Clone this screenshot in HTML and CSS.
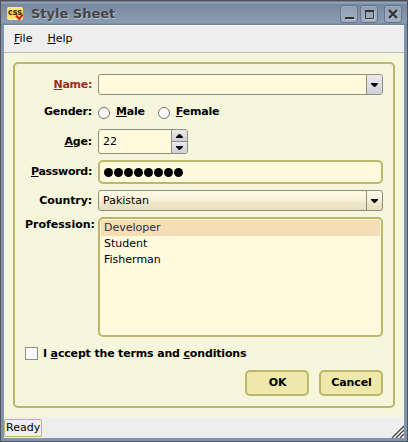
FILE: index.html
```html
<!DOCTYPE html>
<html lang="en">
<head>
<meta charset="utf-8">
<title>Style Sheet</title>
<link rel="stylesheet" href="styles.css">
</head>
<body>
<div class="window">
  <header class="titlebar">
    <svg class="app-icon" width="16" height="14" viewBox="0 0 16 14">
      <defs><linearGradient id="gold" x1="0" y1="0" x2="0" y2="1"><stop offset="0" stop-color="#fff08a"/><stop offset=".5" stop-color="#ffd52e"/><stop offset="1" stop-color="#fff18c"/></linearGradient></defs>
      <rect width="16" height="13" rx="2" fill="url(#gold)"/>
      <text class="icon-text" x="1" y="8" textLength="14" lengthAdjust="spacingAndGlyphs">css</text>
      <path d="M9 8.500l3.300 3.500 3.200-4.500" fill="none" stroke="#c8170c" stroke-width="2"/>
    </svg>
    <h1 class="title">Style Sheet</h1>
    <div class="controls">
      <span class="control"><svg width="16" height="16"><path d="M5 13.500h9" stroke="#bcc7d4"/><path d="M4 12h9" stroke="#333" stroke-width="2"/></svg></span>
      <span class="control"><svg width="16" height="16"><path d="M5 13.500h8.500V5" fill="none" stroke="#bcc7d4"/><path d="M4.500 4v8.500h8V4" fill="none" stroke="#3a3a3c"/><path d="M4 5h9" stroke="#333" stroke-width="2"/></svg></span>
      <span class="control close"><svg width="16" height="16"><path d="M5 5l8 8M13 5l-8 8" stroke="#bcc7d4" stroke-width="1.500"/><path d="M4 4l8 8M12 4l-8 8" stroke="#333" stroke-width="2.300"/></svg></span>
    </div>
  </header>
  <nav class="menubar"><span><u>F</u>ile</span><span><u>H</u>elp</span></nav>
  <main class="central">
    <form class="group">
      <div class="fields">
        <label class="label mandatory"><u>N</u>ame:</label>
        <div class="combo editable"><span class="value"></span><span class="drop"><svg width="7" height="4"><path d="M0 0h7v1L4 4H3L0 1z"/></svg></span></div>
        <label class="label tight">Gender:</label>
        <div class="radios tight"><span class="choice"><i class="radio"></i><span><u>M</u>ale</span></span><span class="choice"><i class="radio"></i><span><u>F</u>emale</span></span></div>
        <label class="label tight"><u>A</u>ge:</label>
        <div class="spin"><span class="value">22</span><span class="steps"><b><svg width="7" height="4"><path d="M0 4V3l3-3h1l3 3v1z"/></svg></b><b><svg width="7" height="4"><path d="M0 0h7v1L4 4H3L0 1z"/></svg></b></span></div>
        <label class="label tighter"><u>P</u>assword:</label>
        <div class="password"><i></i><i></i><i></i><i></i><i></i><i></i><i></i><i></i></div>
        <label class="label country">Country:</label>
        <div class="combo"><span class="value">Pakistan</span><span class="drop"><svg width="7" height="4"><path d="M0 0h7v1L4 4H3L0 1z"/></svg></span></div>
        <label class="label top">Profession:</label>
        <ul class="list"><li class="selected">Developer</li><li>Student</li><li>Fisherman</li></ul>
      </div>
      <div class="agree"><i class="check"></i><span>I <u>a</u>ccept the terms and <u>c</u>onditions</span></div>
      <div class="buttons"><button type="button">OK</button><button type="button">Cancel</button></div>
    </form>
  </main>
  <footer class="status"><span class="message">Ready</span>
    <svg class="grip" width="13" height="13"><path d="M1 13L13 1M5 13l8-8M9 13l4-4" stroke="#444" stroke-width="1.300"/><path d="M3 13L13 3M7 13l6-6M11 13l2-2" stroke="#fff"/></svg>
  </footer>
</div>
</body>
</html>
```
FILE: styles.css
```css
* { box-sizing: border-box; }
body { margin: 0; font: 11px/16px "DejaVu Sans", sans-serif; color: #000; }
u { text-decoration: underline; text-underline-offset: 1px; text-decoration-thickness: 1px; text-decoration-skip-ink: none; }
svg { display: block; }
.window { width: 408px; height: 442px; display: flex; flex-direction: column; background: #8194ab; border: solid #50525e; border-width: 0 1px 1px; padding: 0 3px 3px; }
.titlebar { height: 25px; flex: none; margin: 0 -3px; padding: 3px 5px 0 6px; display: flex; align-items: center; background: linear-gradient(#4d4e5a 0 1px, #737c8b 1px 2px, #95a5b8 2px 3px, #7888a0 4px, #8b9cb2 23px, #71829b 24px); }
.icon-text { font: bold 8px "DejaVu Sans", sans-serif; fill: #3c2600; }
.title { margin: 0 0 0 8px; flex: 1; font-size: 13px; line-height: 20px; color: #444446; text-shadow: 1px 1px 1px #b9c3d0; }
.controls { display: flex; gap: 2px; }
.control { width: 18px; height: 18px; border: 1px solid #65758b; border-radius: 3px; background: linear-gradient(#8e9db1, #a3b2c4); box-shadow: inset 0 0 0 1px #9babbd; }
.close { margin-left: 4px; }
.menubar { height: 28px; flex: none; padding: 5px 10px 0; display: flex; gap: 15px; background: #eee; border-top: 1px solid #fff; border-bottom: 1px solid #b8b8c0; }
.central { height: 364px; flex: none; padding: 9px; background: #f6f6dc; }
.group { height: 346px; padding: 10px; border: 2px solid #bdb76b; border-radius: 5px; font-weight: bold; }
.fields { display: grid; grid-template-columns: 67px 285px; grid-template-rows: 21px 22px 25px 24px 21px 120px; gap: 6px; }
.label { align-self: center; text-align: right; white-space: nowrap; }
.mandatory { color: #a52a2a; letter-spacing: -.3px; }
.tight { letter-spacing: -.2px; }
.tighter { letter-spacing: -.3px; }
.country { letter-spacing: -.1px; }
.top { align-self: start; }
.combo, .spin { display: flex; border: 1px solid #8f8f7e; border-radius: 3px; font-weight: normal; overflow: hidden; background: linear-gradient(#fffbe9, #faf1da 45%, #eee6ca 65%, #e8dfc2); }
.value { flex: 1; padding: 2px 4px; }
.combo .drop { width: 16px; border-left: 1px solid #8f8f7e; display: flex; align-items: center; justify-content: center; }
.editable { background: #fff9dd; }
.editable .drop, .steps b { background: linear-gradient(#e9e9ee, #d0d0da); }
.radios { display: flex; align-items: center; gap: 13px; }
.choice { display: flex; align-items: center; gap: 6px; }
.radio { width: 12px; height: 12px; margin-top: 1px; border: 1px solid #77776e; border-radius: 50%; background: linear-gradient(135deg, #fff, #f4f4fa); }
.spin { width: 90px; background: #fff9dd; }
.spin .value { padding-top: 4px; }
.steps { width: 16px; display: flex; flex-direction: column; border-left: 1px solid #8f8f7e; }
.steps b { flex: 1; display: flex; align-items: center; justify-content: center; }
.steps b + b { border-top: 1px solid #8f8f7e; }
.password, .list { border: 2px solid #bdb76b; border-radius: 5px; background: #fff9dd; }
.password { display: flex; align-items: center; gap: 1px; padding-left: 4px; }
.password i { width: 9px; height: 9px; border-radius: 50%; background: #000; }
.list { margin: 0; padding: 1px; list-style: none; font-weight: normal; }
.list li { height: 16px; padding-left: 3px; line-height: 15px; }
.list .selected { background: #f5deb3; color: #24304c; }
.agree { height: 20px; margin-top: 6px; display: flex; align-items: center; gap: 5px; letter-spacing: -.16px; }
.check { width: 13px; height: 13px; border: 1px solid #8f8f7e; background: linear-gradient(135deg, #fff, #f4f4fa); }
.agree .check { margin-top: 1px; }
.agree span { margin-top: 1px; }
.buttons { display: flex; justify-content: flex-end; gap: 10px; margin-top: 7px; }
button { width: 64px; height: 26px; padding: 0 0 0 1px; border: 2px solid #bdb76b; border-radius: 5px; background: #eee8aa; color: #000; font: bold 11px/16px "DejaVu Sans", sans-serif; letter-spacing: -.1px; }
.status { height: 21px; flex: none; display: flex; justify-content: space-between; align-items: flex-end; background: #eee; }
.message { align-self: flex-start; width: 38px; height: 18px; margin-top: 2px; padding-left: 1px; line-height: 15px; border: 1px solid #bdb76b; border-radius: 2px; }
```
